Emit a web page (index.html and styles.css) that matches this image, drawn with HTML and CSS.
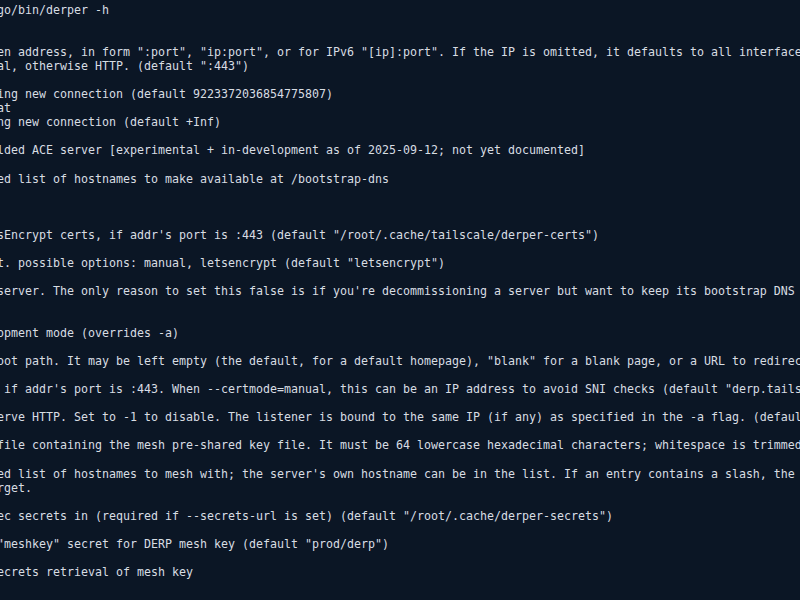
FILE: index.html
```html
<!DOCTYPE html>
<html lang="en">
<head>
<meta charset="utf-8">
<title>derper -h</title>
<link rel="stylesheet" href="styles.css">
</head>
<body>
<main class="terminal">
<pre class="output">go/bin/derper -h


en address, in form ":port", "ip:port", or for IPv6 "[ip]:port". If the IP is omitted, it defaults to all interfaces. Serves HTTPS if the port is 443
al, otherwise HTTP. (default ":443")

ing new connection (default 9223372036854775807)
at
ng new connection (default +Inf)

lded ACE server [experimental + in-development as of 2025-09-12; not yet documented]

ed list of hostnames to make available at /bootstrap-dns



sEncrypt certs, if addr's port is :443 (default "/root/.cache/tailscale/derper-certs")

t. possible options: manual, letsencrypt (default "letsencrypt")

server. The only reason to set this false is if you're decommissioning a server but want to keep its bootstrap DNS functionality


opment mode (overrides -a)

oot path. It may be left empty (the default, for a default homepage), "blank" for a blank page, or a URL to redirect to

 if addr's port is :443. When --certmode=manual, this can be an IP address to avoid SNI checks (default "derp.tailscale.com")

erve HTTP. Set to -1 to disable. The listener is bound to the same IP (if any) as specified in the -a flag. (default 80)

file containing the mesh pre-shared key file. It must be 64 lowercase hexadecimal characters; whitespace is trimmed.

ed list of hostnames to mesh with; the server's own hostname can be in the list. If an entry contains a slash, the second part
rget.

ec secrets in (required if --secrets-url is set) (default "/root/.cache/derper-secrets")

"meshkey" secret for DERP mesh key (default "prod/derp")

ecrets retrieval of mesh key
</pre>
</main>
</body>
</html>
```

FILE: styles.css
```css
html, body {
  margin: 0;
  padding: 0;
  background: #0b1625;
  width: 800px;
  height: 600px;
  overflow: hidden;
}

.terminal {
  width: 800px;
  height: 600px;
  overflow: hidden;
  background: #0b1625;
}

.output {
  margin: 0 0 0 -3px;
  padding: 3px 0 0 0;
  font-family: "DejaVu Sans Mono", "Liberation Mono", monospace;
  font-size: 11.63px;
  line-height: 14.05px;
  color: #d8dde3;
  white-space: pre;
}
```
